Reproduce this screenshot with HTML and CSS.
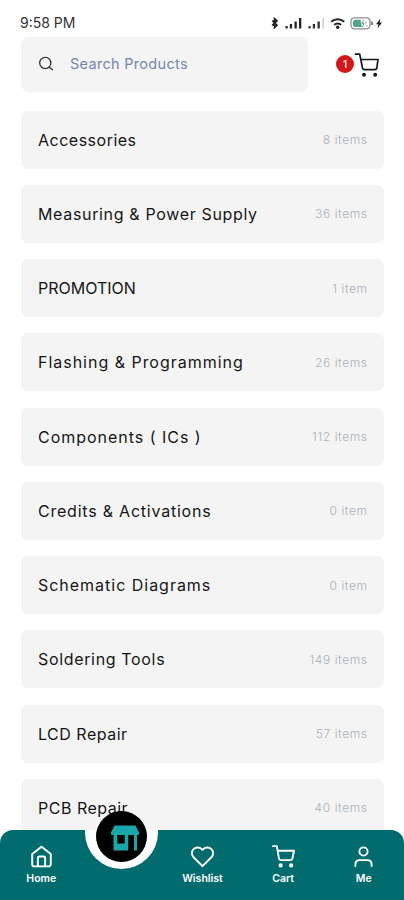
FILE: index.html
```html
<!DOCTYPE html>
<html lang="en">
<head>
<meta charset="utf-8">
<meta name="viewport" content="width=device-width, initial-scale=1">
<title>Categories</title>
<link rel="stylesheet" href="styles.css">
</head>
<body>
<div class="screen">
  <header class="status">
    <span class="time">9:58 PM</span>
    <svg class="indicators" width="116" height="18" viewBox="0 0 116 18">
      <path d="M2.300 6.500l4.600 4.800-2.300 2.200V4.700l2.300 2.100-4.600 4.700" fill="none" stroke="#222" stroke-width="1.800"/>
      <path d="M15.500 12h2.200v2.500h-2.200zM19.800 10h2.300v4.500h-2.300zM24.500 7.500h2.300v7h-2.300zM29 4h2.300v10.500H29z" fill="#252525"/>
      <path d="M38.500 12h2.200v2.500h-2.200zM42.800 10h2.300v4.500h-2.300zM47.500 7.500h2.300v7h-2.300z" fill="#333"/>
      <path d="M52.300 4H54v10.500h-1.700z" fill="#d0d0d0"/>
      <path d="M61.200 7.700a10 10 0 0 1 13 0M64.200 10.800a5.700 5.700 0 0 1 7 0" fill="none" stroke="#222" stroke-width="2"/>
      <circle cx="67.700" cy="13.200" r="1.700" fill="#222"/>
      <rect x="81" y="3.800" width="19" height="11" rx="3.500" fill="#fff" stroke="#8d8d8d" stroke-width="1.300"/>
      <path d="M85 5.800h5.500l1.500 7.200h-7a2 2 0 0 1-2-2V7.800a2 2 0 0 1 2-2z" fill="#4fa787"/>
      <path d="M93.500 6L92 9.500h2L92.500 13M95.800 7.500v2M97 11v1.500" fill="none" stroke="#7a9a8e" stroke-width="1"/>
      <path d="M102 7.500V11" stroke="#666" stroke-width="1.600"/>
      <path d="M110.500 4.500l-4.500 5.700h2.400l-.9 4.300 4.500-6h-2.300z" fill="#222"/>
    </svg>
  </header>

  <div class="top">
    <div class="search">
      <svg width="16" height="16" viewBox="0 0 16 16" fill="none" stroke="#333" stroke-width="1.300" stroke-linecap="round"><circle cx="7.300" cy="7" r="5.600"/><path d="M11.300 11.200l3.200 2.600"/></svg>
      <span class="placeholder">Search Products</span>
    </div>
    <div class="basket">
      <span class="badge">1</span>
      <svg width="26" height="26" viewBox="0 0 26 26" fill="none" stroke="#181818" stroke-width="1.700" stroke-linecap="round" stroke-linejoin="round"><path d="M1.500 2.200h4.200L8.500 16q.4 1.700 2 1.700h10.300q1.600 0 2-1.700L24 7.500H7"/><circle cx="10" cy="22.700" r="1.100" fill="#181818"/><circle cx="21.200" cy="22.700" r="1.100" fill="#181818"/></svg>
    </div>
  </div>

  <main class="list">
    <div class="row"><span class="name snug">Accessories</span><span class="count">8 items</span></div>
    <div class="row"><span class="name medium">Measuring &amp; Power Supply</span><span class="count">36 items</span></div>
    <div class="row"><span class="name">PROMOTION</span><span class="count">1 item</span></div>
    <div class="row"><span class="name loose">Flashing &amp; Programming</span><span class="count">26 items</span></div>
    <div class="row"><span class="name loose">Components ( ICs )</span><span class="count">112 items</span></div>
    <div class="row"><span class="name wide">Credits &amp; Activations</span><span class="count">0 item</span></div>
    <div class="row"><span class="name loose">Schematic Diagrams</span><span class="count">0 item</span></div>
    <div class="row"><span class="name medium">Soldering Tools</span><span class="count">149 items</span></div>
    <div class="row"><span class="name snug">LCD Repair</span><span class="count">57 items</span></div>
    <div class="row"><span class="name snug">PCB Repair</span><span class="count">40 items</span></div>
  </main>

  <div class="dock">
    <nav class="nav">
      <a class="tab"><svg viewBox="0 0 24 24"><path d="M2.300 9.500L12 1.800l9.700 7.700V20a2.300 2.300 0 0 1-2.300 2.300H4.600A2.300 2.300 0 0 1 2.300 20z"/><path d="M8.200 22v-8.500q0-1.500 1.500-1.500h4.600q1.500 0 1.500 1.500V22"/></svg><span>Home</span></a>
      <span class="tab"></span>
      <a class="tab"><svg viewBox="0 0 24 24"><path d="M12 22L2.700 12.800A6 6 0 0 1 11.200 4.300l.8.900.8-.9a6 6 0 0 1 8.500 8.500z"/></svg><span>Wishlist</span></a>
      <a class="tab"><svg viewBox="0 0 24 24"><path d="M1 1.200h4L7.300 14.200q.4 1.600 2 1.600h10q1.600 0 2-1.600L23 6H6"/><circle cx="9" cy="21.300" r="1.200"/><circle cx="20" cy="21.300" r="1.200"/></svg><span>Cart</span></a>
      <a class="tab"><svg viewBox="0 0 24 24"><circle cx="12" cy="6.800" r="4.300"/><path d="M3.500 22v-1.500q0-4.700 4.700-4.700h7.600q4.700 0 4.700 4.700V22"/></svg><span>Me</span></a>
    </nav>
    <div class="notch"></div>
    <div class="shop">
      <svg width="32" height="28" viewBox="0 0 32 28" fill="#18a6a8"><path d="M5.500 1.500h21l3.700 7.300q.5 2.200-1.500 2.200H3.300Q1.300 11 1.800 8.800z"/><path d="M4.500 11h3.800v8.500h7.400V11h3.500v15.500H4.500z"/><path d="M25 11h3v15.500h-3z"/></svg>
    </div>
  </div>
</div>
</body>
</html>
```
FILE: styles.css
```css
* { box-sizing: border-box; }
body { margin: 0; background: #fff; font-family: "Inter", "Liberation Sans", sans-serif; }
.screen { position: relative; width: 404px; height: 900px; overflow: hidden; background: #fff; }

.status { display: flex; justify-content: space-between; align-items: center; height: 37px; padding: 9px 18px 0 20px; }
.time { font-size: 14px; color: #333; line-height: 18px; white-space: nowrap; }
.indicators { display: block; }

.top { display: flex; justify-content: space-between; align-items: center; height: 55px; padding: 0 24px 0 21px; }
.search { display: flex; align-items: center; gap: 16px; width: 287px; height: 55px; padding: 0 0 2px 17px; border-radius: 8px; background: #f4f4f4; }
.placeholder { font-size: 14.5px; color: #7488ab; letter-spacing: .3px; }
.basket { display: flex; align-items: center; }
.badge { width: 18px; height: 18px; margin-bottom: 1px; border-radius: 50%; background: #d2181c; color: #fff; font-size: 10px; font-weight: 500; line-height: 18px; text-align: center; }

.list { display: grid; grid-auto-rows: 58px; gap: 16.25px; padding: 18.5px 20px 0 21px; }
.row { display: flex; justify-content: space-between; align-items: center; padding: 0 17px; border-radius: 7px; background: #f4f4f4; }
.name { font-size: 16px; color: #161616; white-space: nowrap; }
.snug { letter-spacing: .5px; }
.medium { letter-spacing: .66px; }
.wide { letter-spacing: .78px; }
.loose { letter-spacing: .98px; }
.count { margin-right: -.6px; font-size: 12px; font-weight: 300; letter-spacing: .6px; color: #a9b0ba; white-space: nowrap; }

.dock { position: absolute; left: 0; right: 0; bottom: 0; height: 70px; }
.nav { display: flex; height: 70px; padding-left: 1px; border-radius: 13px 13px 0 0; background: #026b6e; }
.tab { flex: 1; display: flex; flex-direction: column; align-items: center; padding-top: 15px; color: #fff; font-size: 10.5px; font-weight: 600; line-height: 14px; }
.tab svg { width: 23px; height: 23px; margin-bottom: 4px; fill: none; stroke: #fff; stroke-width: 2; stroke-linecap: round; stroke-linejoin: round; }
.notch { position: absolute; left: 85px; top: 0; width: 73px; height: 39px; border-radius: 0 0 37px 37px; background: #fff; }
.shop { position: absolute; left: 96px; top: -19px; width: 51px; height: 51px; border-radius: 50%; background: #000; display: flex; align-items: center; justify-content: center; padding-left: 6px; padding-top: 2px; }
```
